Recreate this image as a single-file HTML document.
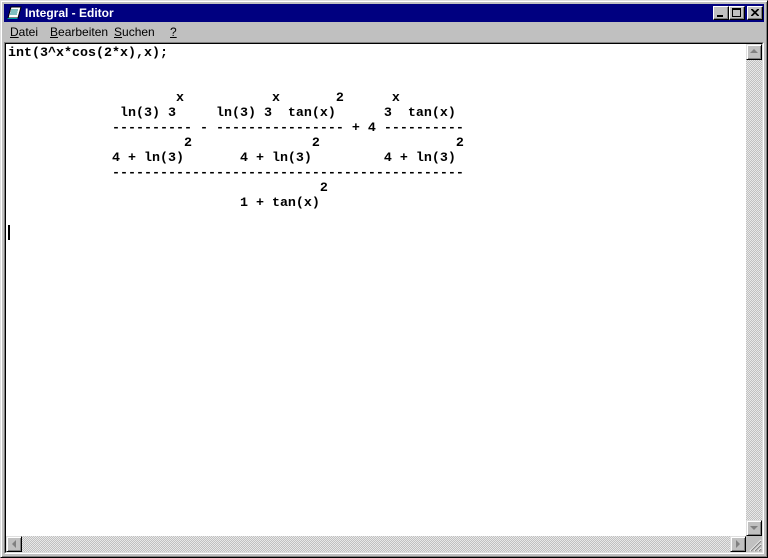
<!DOCTYPE html>
<html><head><meta charset="utf-8"><style>
*{margin:0;padding:0;box-sizing:border-box}
body{width:768px;height:558px;background:#c0c0c0;position:relative;overflow:hidden;font-family:"Liberation Sans",sans-serif}
.win{position:absolute;left:0;top:0;width:768px;height:558px;border:1px solid #dfdfdf;border-right-color:#000;border-bottom-color:#000;box-shadow:inset 1px 1px #fff,inset -1px -1px #808080}
.title{position:absolute;left:4px;top:4px;width:760px;height:18px;background:#000080;color:#fff;font-weight:bold;font-size:12px;line-height:18px;padding-left:21px}
.ico{position:absolute;left:3px;top:2px;width:15px;height:14px}
.btn{position:absolute;top:2px;width:16px;height:14px;background:#c0c0c0;border:1px solid #fff;border-right-color:#000;border-bottom-color:#000;box-shadow:inset -1px -1px #808080}
.menu{position:absolute;left:4px;top:22px;height:20px;font-size:12px;line-height:20px;color:#000}
.menu span{position:absolute;white-space:nowrap}
.menu u{text-decoration:underline}
.edit{position:absolute;left:4px;top:42px;width:760px;height:512px;border:1px solid #808080;border-right-color:#fff;border-bottom-color:#fff;background:#fff}
.edit2{position:absolute;inset:0;border:1px solid #000;border-right-color:#dfdfdf;border-bottom-color:#dfdfdf}
pre{position:absolute;left:3px;top:3px;font-family:"Liberation Mono",monospace;font-weight:bold;font-size:13.33px;line-height:15px;color:#000}
.chk{background-color:#e8e8e8;background-image:linear-gradient(45deg,#c0c0c0 25%,transparent 25%,transparent 75%,#c0c0c0 75%),linear-gradient(45deg,#c0c0c0 25%,transparent 25%,transparent 75%,#c0c0c0 75%);background-size:2px 2px;background-position:0 0,1px 1px}
.sb{position:absolute;width:16px;height:16px;background:#c0c0c0;border:1px solid #dfdfdf;border-right-color:#000;border-bottom-color:#000;box-shadow:inset 1px 1px #fff,inset -1px -1px #808080}
</style></head><body>
<div class="win"></div>
<div class="title">
<svg class="ico" viewBox="0 0 15 14"><path d="M4 1h10l-3 11H1z" fill="#fff" stroke="#000" stroke-width="1"/><path d="M4 4h7M3.5 6h7M3 8h7" stroke="#008080"/><path d="M1 12h10l-1 1H0z" fill="#00a0a0"/></svg>
Integral - Editor
<div class="btn" style="left:709px"><div style="position:absolute;left:3px;top:8px;width:6px;height:2px;background:#000"></div></div>
<div class="btn" style="left:725px"><div style="position:absolute;left:2px;top:1px;width:9px;height:9px;border:1px solid #000;border-top-width:2px"></div></div>
<div class="btn" style="left:743px"><svg style="position:absolute;left:3px;top:2px" width="8" height="7"><path d="M0 0l7 7M1 0l7 7M7 0l-7 7M8 0l-7 7" stroke="#000" stroke-width="1"/></svg></div>
</div>
<div class="menu">
<span style="left:6px"><u>D</u>atei</span>
<span style="left:46px"><u>B</u>earbeiten</span>
<span style="left:110px"><u>S</u>uchen</span>
<span style="left:166px"><u>?</u></span>
</div>
<div class="edit"><div class="edit2"></div>
<pre>int(3^x*cos(2*x),x);


                     x           x       2      x
              ln(3) 3     ln(3) 3  tan(x)      3  tan(x)
             ---------- - ---------------- + 4 ----------
                      2               2                 2
             4 + ln(3)       4 + ln(3)         4 + ln(3)
             --------------------------------------------
                                       2
                             1 + tan(x)
</pre>
<div style="position:absolute;left:3px;top:182px;width:2px;height:15px;background:#000"></div>
<div class="chk" style="position:absolute;left:741px;top:1px;width:16px;height:492px"></div>
<div class="sb" style="left:741px;top:1px"><svg style="position:absolute;left:3px;top:4px" width="8" height="5"><path d="M4 0L0 4h8z" fill="#808080"/></svg></div>
<div class="sb" style="left:741px;top:477px"><svg style="position:absolute;left:3px;top:5px" width="8" height="5"><path d="M0 0h8L4 4z" fill="#808080"/></svg></div>
<div class="chk" style="position:absolute;left:1px;top:493px;width:740px;height:16px"></div>
<div class="sb" style="left:1px;top:493px"><svg style="position:absolute;left:5px;top:3px" width="5" height="8"><path d="M4 0L0 4l4 4z" fill="#808080"/></svg></div>
<div class="sb" style="left:725px;top:493px"><svg style="position:absolute;left:5px;top:3px" width="5" height="8"><path d="M0 0l4 4-4 4z" fill="#808080"/></svg></div>
<div style="position:absolute;left:741px;top:493px;width:16px;height:16px;background:#c0c0c0"><svg width="16" height="16"><path d="M15 4L4 15M15 8L8 15M15 12L12 15" stroke="#fff"/><path d="M15 5L5 15M15 9L9 15M15 13L13 15" stroke="#808080"/></svg></div>
</div>
</body></html>
